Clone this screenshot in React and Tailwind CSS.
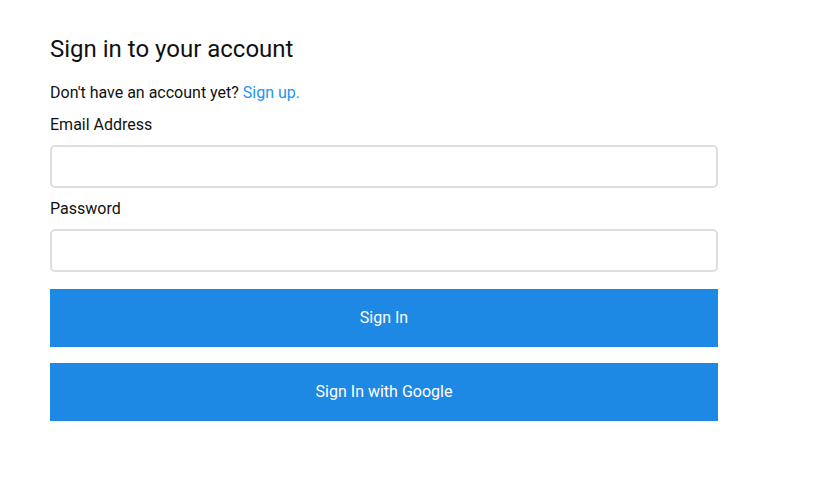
export default function App() {
  return (
    <div className="min-h-[480px] w-[814px] bg-white font-['Roboto',sans-serif] text-[#111]">
      <div className="w-[668px] ml-[50px] pt-[35px]">
        <h1 className="text-[24px] leading-[28px] font-normal">
          Sign in to your account
        </h1>
        <p className="mt-[20px] text-[16px] leading-[20px]">
          Don't have an account yet?{" "}
          <a href="#" className="text-[#2196f3]">
            Sign up.
          </a>
        </p>
        <form className="flex flex-col" onSubmit={(e) => e.preventDefault()}>
          <label className="mt-[12px] text-[16px] leading-[20px]">
            Email Address
          </label>
          <input
            type="email"
            className="mt-[10px] h-[43px] rounded-[5px] border-2 border-[#dedede] px-3 outline-none"
          />
          <label className="mt-[11px] text-[16px] leading-[20px]">
            Password
          </label>
          <input
            type="password"
            className="mt-[10px] h-[43px] rounded-[5px] border-2 border-[#dedede] px-3 outline-none"
          />
          <button className="mt-[17px] h-[58px] bg-[#1e88e5] text-[16px] text-white">
            Sign In
          </button>
          <button
            type="button"
            className="mt-[16px] h-[58px] bg-[#1e88e5] text-[16px] text-white"
          >
            Sign In with Google
          </button>
        </form>
      </div>
    </div>
  );
}
